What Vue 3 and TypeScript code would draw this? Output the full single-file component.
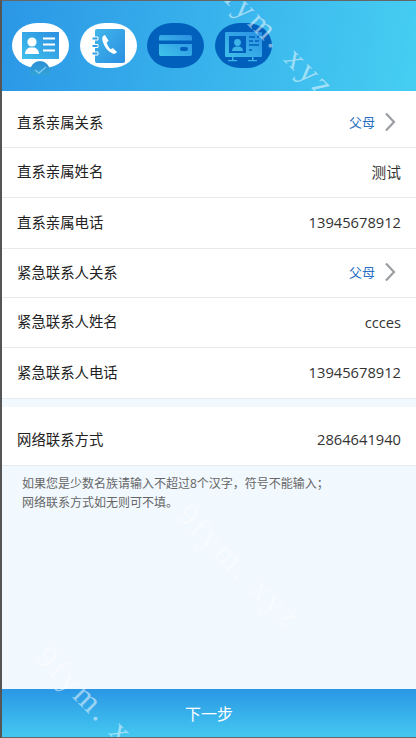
<script setup lang="ts">
interface Row {
  label: string
  value: string
  arrow?: boolean
}

const rows: Row[] = [
  { label: '直系亲属关系', value: '父母', arrow: true },
  { label: '直系亲属姓名', value: '测试' },
  { label: '直系亲属电话', value: '13945678912' },
  { label: '紧急联系人关系', value: '父母', arrow: true },
  { label: '紧急联系人姓名', value: 'ccces' },
  { label: '紧急联系人电话', value: '13945678912' },
]
</script>

<template>
  <div class="page">
    <header class="steps">
      <div class="pill">
        <svg width="57" height="45" viewBox="0 0 57 45">
          <defs>
            <linearGradient id="g1" x1="0" y1="1" x2="1" y2="0">
              <stop offset="0" stop-color="#3fc0ea" />
              <stop offset="1" stop-color="#2b8fe2" />
            </linearGradient>
          </defs>
          <rect x="10" y="9" width="37" height="27" fill="url(#g1)" />
          <circle cx="20" cy="19" r="4.6" fill="#fff" />
          <path d="M13 31c0-4 3-6 4.500-6.500h5c1.500.5 4.500 2.500 4.500 6.500z" fill="#fff" />
          <path d="M31 15.500h12M31 21.500h12M31 27.500h12" stroke="#fff" stroke-width="1.800" />
        </svg>
        <div class="badge">
          <svg width="20" height="14" viewBox="0 0 20 14">
            <defs>
              <linearGradient id="g5" x1="0" y1="0" x2="0" y2="1">
                <stop offset="0" stop-color="#2b8ed6" />
                <stop offset="1" stop-color="#35acd6" />
              </linearGradient>
            </defs>
            <circle cx="10" cy="10" r="10" fill="url(#g5)" />
            <path d="M5 9l4 3 7-6" fill="none" stroke="#7cc6ec" stroke-width="1.500" />
          </svg>
        </div>
      </div>
      <div class="pill">
        <svg width="57" height="45" viewBox="0 0 57 45">
          <defs>
            <linearGradient id="g2" x1="0" y1="0" x2="1" y2="1">
              <stop offset="0" stop-color="#3fb6ea" />
              <stop offset="1" stop-color="#2b8fe2" />
            </linearGradient>
          </defs>
          <rect x="15" y="6" width="30" height="34" rx="2" fill="url(#g2)" />
          <path d="M12 14h6v3h-6zM12 21.500h6v3h-6zM12 29h6v3h-6z" fill="#2f9fe6" stroke="#fff" stroke-width="1" />
          <path d="M25 12c-1.500.5-3 1.600-2.700 4 .5 5 4.500 12 10.200 14.500 1.700.7 3.400 0 4.500-1.500l-4.200-4-2 1.200c-1.600-1-3.800-4.800-4.100-7l2-1.200z" fill="#fff" />
        </svg>
      </div>
      <div class="pill dark">
        <svg width="57" height="45" viewBox="0 0 57 45">
          <defs>
            <linearGradient id="g3" x1="0" y1="1" x2="1" y2="0">
              <stop offset="0" stop-color="#3fc4ea" />
              <stop offset="1" stop-color="#2b8fe2" />
            </linearGradient>
          </defs>
          <rect x="12" y="12" width="33" height="21" rx="2" fill="url(#g3)" />
          <rect x="12" y="17.500" width="33" height="3.500" fill="#0060bb" />
          <rect x="33" y="24" width="8" height="4" rx="2" fill="#0060bb" />
        </svg>
      </div>
      <div class="pill dark">
        <svg width="57" height="45" viewBox="0 0 57 45">
          <defs>
            <linearGradient id="g4" x1="0" y1="1" x2="1" y2="0">
              <stop offset="0" stop-color="#3fc0ea" />
              <stop offset="1" stop-color="#2b8fe2" />
            </linearGradient>
          </defs>
          <rect x="10" y="9" width="37" height="25" rx="1" fill="url(#g4)" />
          <rect x="14" y="13" width="17" height="17" fill="#0060bb" />
          <circle cx="22.500" cy="19.500" r="3.400" fill="#3fb4e8" />
          <path d="M17 28c0-3 2-4 4-4.500h3c2 .5 4 1.500 4 4.500z" fill="#3fb4e8" />
          <path d="M34 14h6M42 14h2M34 18h4M40 18h4M34 22h10M34 27h3" stroke="#0060bb" stroke-width="1.600" />
          <path d="M17 34h1.500v3h-1.500zM13 37h9v1.200h-9zM37 34h1.500v3h-1.500zM33 37h9v1.200h-9z" fill="#3fb4e8" />
        </svg>
      </div>
    </header>

    <section class="list">
      <div v-for="row in rows" :key="row.label" class="row">
        <span class="label">{{ row.label }}</span>
        <span class="value" :class="{ link: row.arrow }">{{ row.value }}</span>
        <svg v-if="row.arrow" class="chevron" width="12" height="20" viewBox="0 0 12 20">
          <path d="M2 1.500l8 8.500-8 8.500" fill="none" stroke="#9a9ea3" stroke-width="2.200" />
        </svg>
      </div>
    </section>

    <section class="list net">
      <div class="row">
        <span class="label">网络联系方式</span>
        <span class="value">2864641940</span>
      </div>
    </section>

    <p class="note">如果您是少数名族请输入不超过8个汉字，符号不能输入；<br />网络联系方式如无则可不填。</p>

    <footer class="next">下一步</footer>

    <div class="marks" aria-hidden="true">
      <span class="mark m1">9fym. xyz</span>
      <span class="mark m2">9fym. xyz</span>
      <span class="mark m3">9fym. xyz</span>
    </div>
  </div>
</template>

<style>
html,
body {
  margin: 0;
  background: #f1f8fe;
}
</style>

<style scoped>
.page {
  position: relative;
  box-sizing: border-box;
  height: 738px;
  display: flex;
  flex-direction: column;
  overflow: hidden;
  background: #f1f8fe;
  border-left: 2px solid #555;
  border-top: 1px solid #666;
  border-bottom: 1px solid #666;
  font-family: "Open Sans", "Noto Sans CJK SC", sans-serif;
}
.steps {
  height: 90px;
  box-sizing: border-box;
  display: flex;
  gap: 10.67px;
  padding: 22px 0 0 10px;
  background: linear-gradient(100deg, #2b97e6, #46cef2);
}
.pill {
  position: relative;
  width: 57px;
  height: 45px;
  border-radius: 25px / 22.5px;
  background: #fff;
}
.pill svg {
  display: block;
}
.dark {
  background: #0060bb;
}
.badge {
  position: absolute;
  left: 18px;
  top: 38px;
}
.list {
  background: #fff;
}
.row {
  display: flex;
  align-items: center;
  box-sizing: border-box;
  height: 50px;
  padding: 0 15px 4px;
  border-bottom: 1px solid #e9eaeb;
  font-size: 14.4px;
  color: #333;
}
.row:first-child {
  height: 57px;
  padding-top: 7px;
  padding-bottom: 2px;
}
.row:nth-child(3),
.row:nth-child(6) {
  height: 51px;
}
.row:nth-child(4) {
  height: 49px;
  padding-bottom: 3px;
}
.label {
  color: #222;
}
.value {
  margin-left: auto;
  margin-top: 2px;
  font-size: 14.7px;
}
.link {
  margin-top: 0;
  color: #2a6fc4;
  font-size: 13px;
}
.chevron {
  margin-left: 9px;
  margin-right: 5px;
}
.net {
  margin-top: 8px;
}
.net .row:first-child {
  height: 59px;
  padding-top: 6px;
}
.note {
  margin: 8px 0 0 20px;
  font-size: 12px;
  line-height: 19px;
  color: #666;
}
.next {
  margin-top: auto;
  height: 48px;
  line-height: 50px;
  flex-shrink: 0;
  text-align: center;
  font-size: 16px;
  color: #fff;
  background: linear-gradient(180deg, #2a97e5, #44c8f0);
}
.marks {
  position: absolute;
  inset: 0;
  overflow: hidden;
  pointer-events: none;
}
.mark {
  position: absolute;
  font-family: "Liberation Serif", serif;
  font-size: 32px;
  letter-spacing: 3.5px;
  line-height: 1;
  white-space: nowrap;
  color: rgba(255, 255, 255, 0.5);
  transform: rotate(45deg);
  transform-origin: left top;
}
.m1 {
  left: 226px;
  top: -34px;
}
.m2 {
  left: 192px;
  top: 497px;
}
.m3 {
  left: 51px;
  top: 639px;
}
</style>
